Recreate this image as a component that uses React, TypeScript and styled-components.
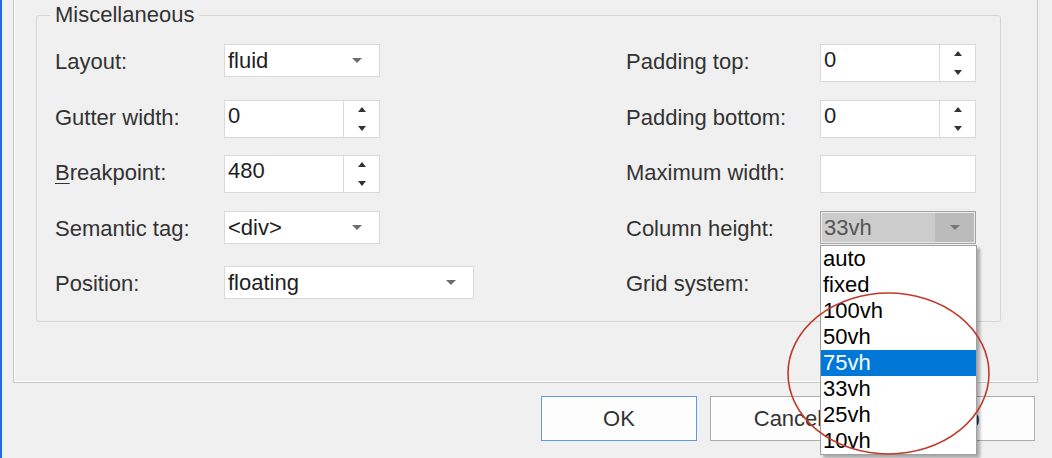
import React from "react"
import styled, { createGlobalStyle, css } from "styled-components"

const GlobalStyle = createGlobalStyle`
  html, body {
    margin: 0;
    padding: 0;
    background: #f0f0f0;
  }
  body {
    font-family: "Liberation Sans", Arial, sans-serif;
    overflow: hidden;
  }
`

const Window = styled.div`
  box-sizing: border-box;
  width: 1052px;
  height: 458px;
  border-left: 2px solid #1a6ee0;
  padding: 0 14px 0 11px;
  display: flex;
  flex-direction: column;
  color: #333;
  font-size: 22px;
`

const Panel = styled.div`
  border: 1px solid #c8c8c8;
  border-top: none;
  box-shadow: inset 1px 0 0 #fff, inset 0 -1px 0 #fff;
  padding: 2px 0 60px 22px;
`

const GroupBox = styled.fieldset`
  box-sizing: border-box;
  width: 965px;
  margin: 0;
  padding: 0;
  min-width: 0;
  border: 1px solid #d6d6d6;
  border-radius: 3px;
`

const Legend = styled.legend`
  margin-left: 13px;
  padding: 0 5px;
  font-size: 22px;
  line-height: 26px;
  color: #333;
`

const Form = styled.div`
  display: grid;
  grid-template-columns: 169px 402px 194px 1fr;
  grid-auto-rows: 38px;
  row-gap: 17.5px;
  align-items: start;
  padding: 16px 0 17px 18px;
`

const Label = styled.div`
  line-height: 36px;
  white-space: nowrap;
  color: #333;
`

const HotKey = styled.span`
  text-decoration: underline;
  text-decoration-thickness: 1px;
  text-underline-offset: 3px;
`

const Caret = styled.span<{ $dir: "up" | "down"; $color?: string; $w?: number }>`
  display: block;
  width: 0;
  height: 0;
  border-left: ${p => (p.$w ?? 10) / 2}px solid transparent;
  border-right: ${p => (p.$w ?? 10) / 2}px solid transparent;
  ${p =>
    p.$dir === "down"
      ? css`border-top: 5px solid ${p.$color ?? "#6d6d6d"};`
      : css`border-bottom: 5px solid ${p.$color ?? "#6d6d6d"};`}
`

const SelectBox = styled.div<{ $w: number; $open?: boolean }>`
  box-sizing: border-box;
  width: ${p => p.$w}px;
  height: 33px;
  display: flex;
  border: 1px solid ${p => (p.$open ? "#a3a3a3" : "#d9d9d9")};
  background: ${p => (p.$open ? "#cccccc" : "#fff")};
  ${p => p.$open && css`box-shadow: inset 0 0 0 1px #ececec;`}
`

const SelectValue = styled.div<{ $open?: boolean }>`
  flex: 1;
  padding-left: 3px;
  line-height: 31px;
  color: ${p => (p.$open ? "#555" : "#1e1e1e")};
  white-space: nowrap;
  overflow: hidden;
`

const SelectArrow = styled.div<{ $open?: boolean }>`
  width: ${p => (p.$open ? 39 : 44)}px;
  display: flex;
  align-items: center;
  justify-content: center;
  ${p =>
    p.$open &&
    css`
      background: #bbbbbb;
      margin: 1px 1px 1px 0;
    `}
`

const SpinBox = styled.div`
  box-sizing: border-box;
  width: 156px;
  height: 38px;
  display: flex;
  border: 1px solid #d9d9d9;
  background: #fff;
`

const SpinValue = styled.div`
  flex: 1;
  padding-left: 3px;
  line-height: 29px;
  color: #1e1e1e;
`

const SpinButtons = styled.div`
  box-sizing: border-box;
  width: 36px;
  border-left: 1px solid #d9d9d9;
  display: flex;
  flex-direction: column;
  align-items: center;
  justify-content: space-between;
  padding: 6px 0;
`

const TextBox = styled.div`
  box-sizing: border-box;
  width: 156px;
  height: 38px;
  border: 1px solid #d9d9d9;
  background: #fff;
`

const Anchor = styled.div`
  position: relative;
  width: 156px;
`

const ListBox = styled.ul`
  position: absolute;
  top: 100%;
  left: 0;
  z-index: 10;
  box-sizing: border-box;
  width: 157px;
  margin: 1px 0 0;
  padding: 0;
  list-style: none;
  background: #fff;
  border: 1px solid #a0a0a0;
  box-shadow: 3px 3px 3px rgba(0, 0, 0, 0.3);
`

const ListItem = styled.li<{ $active?: boolean }>`
  height: 26px;
  line-height: 26px;
  padding-left: 2px;
  color: ${p => (p.$active ? "#fff" : "#000")};
  background: ${p => (p.$active ? "#0078d7" : "transparent")};
`

const Annotation = styled.svg`
  position: absolute;
  left: -34px;
  top: 80px;
  z-index: 11;
  pointer-events: none;
  overflow: visible;
`

const ButtonRow = styled.div`
  display: flex;
  justify-content: flex-end;
  gap: 13px;
  margin-top: 13px;
  padding-right: 3px;
`

const DialogButton = styled.button<{ $primary?: boolean }>`
  box-sizing: border-box;
  width: 156px;
  height: 45px;
  font-family: inherit;
  font-size: 22px;
  color: #333;
  background: #fdfdfd;
  border: 1px solid ${p => (p.$primary ? "#5f9be3" : "#adadad")};
  padding: 0;
`

const Select = ({ value, width = 156, open }: { value: string; width?: number; open?: boolean }) => (
  <SelectBox $w={width} $open={open}>
    <SelectValue $open={open}>{value}</SelectValue>
    <SelectArrow $open={open}>
      <Caret $dir="down" $color={open ? "#777" : "#6d6d6d"} />
    </SelectArrow>
  </SelectBox>
)

const Spin = ({ value }: { value: string }) => (
  <SpinBox>
    <SpinValue>{value}</SpinValue>
    <SpinButtons>
      <Caret $dir="up" $color="#333" $w={9} />
      <Caret $dir="down" $color="#333" $w={9} />
    </SpinButtons>
  </SpinBox>
)

const heights = ["auto", "fixed", "100vh", "50vh", "75vh", "33vh", "25vh", "10vh"]

export default function App() {
  return (
    <>
      <GlobalStyle />
      <Window>
        <Panel>
          <GroupBox>
            <Legend>Miscellaneous</Legend>
            <Form>
              <Label>Layout:</Label>
              <Select value="fluid" />
              <Label>Padding top:</Label>
              <Spin value="0" />

              <Label>Gutter width:</Label>
              <Spin value="0" />
              <Label>Padding bottom:</Label>
              <Spin value="0" />

              <Label>
                <HotKey>B</HotKey>reakpoint:
              </Label>
              <Spin value="480" />
              <Label>Maximum width:</Label>
              <TextBox />

              <Label>Semantic tag:</Label>
              <Select value="<div>" />
              <Label>Column height:</Label>
              <Anchor>
                <Select value="33vh" open />
                <ListBox>
                  {heights.map(h => (
                    <ListItem key={h} $active={h === "75vh"}>
                      {h}
                    </ListItem>
                  ))}
                </ListBox>
                <Annotation width="206" height="166" viewBox="0 0 206 166">
                  <ellipse cx="102.5" cy="82.5" rx="100.5" ry="80.5" fill="none" stroke="#c0392b" strokeWidth="1.6" />
                </Annotation>
              </Anchor>

              <Label>Position:</Label>
              <Select value="floating" width={250} />
              <Label>Grid system:</Label>
              {/* covered by the open list above */}
              <Select value="" />
            </Form>
          </GroupBox>
        </Panel>
        <ButtonRow>
          <DialogButton $primary>OK</DialogButton>
          <DialogButton>Cancel</DialogButton>
          <DialogButton>Help</DialogButton>
        </ButtonRow>
      </Window>
    </>
  )
}
